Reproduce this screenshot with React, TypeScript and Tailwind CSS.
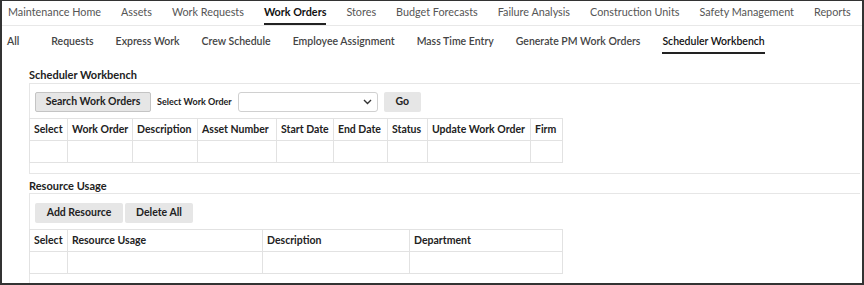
import React from "react";

const topNav = [
  "Maintenance Home",
  "Assets",
  "Work Requests",
  "Work Orders",
  "Stores",
  "Budget Forecasts",
  "Failure Analysis",
  "Construction Units",
  "Safety Management",
  "Reports",
];

const subNav = [
  "All",
  "Requests",
  "Express Work",
  "Crew Schedule",
  "Employee Assignment",
  "Mass Time Entry",
  "Generate PM Work Orders",
  "Scheduler Workbench",
];

const woCols: [string, number][] = [
  ["Select", 38],
  ["Work Order", 65],
  ["Description", 65],
  ["Asset Number", 79],
  ["Start Date", 57],
  ["End Date", 54],
  ["Status", 40],
  ["Update Work Order", 103],
  ["Firm", 32],
];

const resCols: [string, number][] = [
  ["Select", 38],
  ["Resource Usage", 195],
  ["Description", 147],
  ["Department", 153],
];

function Table({ cols }: { cols: [string, number][] }) {
  const total = cols.reduce((a, [, w]) => a + w, 0) + 1;
  return (
    <table
      className="table-fixed border-collapse text-[10.5px] text-[#222]"
      style={{ width: total }}
    >
      <colgroup>
        {cols.map(([c, w]) => (
          <col key={c} style={{ width: w }} />
        ))}
      </colgroup>
      <tbody>
        <tr className="h-[22px]">
          {cols.map(([c]) => (
            <th
              key={c}
              className="overflow-hidden border border-[#e2e2e2] px-[4px] text-left font-bold whitespace-nowrap"
            >
              {c}
            </th>
          ))}
        </tr>
        <tr className="h-[22px]">
          {cols.map(([c]) => (
            <td key={c} className="border border-[#e2e2e2]"></td>
          ))}
        </tr>
      </tbody>
    </table>
  );
}

function Btn({ children, className = "" }: { children: React.ReactNode; className?: string }) {
  return (
    <div
      className={
        "flex h-[20px] items-center justify-center rounded-[2px] bg-[#e6e6e6] text-[10.5px] font-bold text-[#222] " +
        className
      }
    >
      {children}
    </div>
  );
}

export default function App() {
  return (
    <div
      className="h-[285px] w-[864px] overflow-hidden border-x-2 border-b-2 border-t border-[#333] bg-white"
      style={{ fontFamily: "Lato, 'Noto Sans', sans-serif" }}
    >
      {/* top nav */}
      <div className="flex h-[25px] items-stretch gap-[20px] border-b border-[#e8e8e8] pl-[6px] text-[10.8px] text-[#555]">
        {topNav.map((t) => (
          <div
            key={t}
            className={
              "flex items-center whitespace-nowrap border-b-2 pt-[1px] " +
              (t === "Work Orders" ? "border-[#222] font-bold text-[#111]" : "border-transparent")
            }
          >
            {t}
          </div>
        ))}
      </div>
      {/* sub nav */}
      <div className="flex h-[28px] items-stretch gap-[22px] pl-[5px] text-[10.5px] text-[#444]">
        {subNav.map((t, i) => (
          <div
            key={t}
            className={
              "flex items-center whitespace-nowrap border-b-2 pt-[5px] font-semibold " +
              (i === 1 ? "ml-[10px] " : "") +
              (t === "Scheduler Workbench" ? "border-[#222] font-bold text-[#111]" : "border-transparent")
            }
          >
            {t}
          </div>
        ))}
      </div>

      <div className="pl-[27px] pr-[2px]">
        {/* Scheduler Workbench */}
        <div className="mt-[13px] h-[17px] border-b border-[#e6e6e6] text-[11px] leading-[16px] font-bold text-[#222]">
          Scheduler Workbench
        </div>
        <div className="border-b border-l border-[#e6e6e6] pb-[10px]">
          <div className="flex items-center gap-[6px] pt-[8px] pb-[6px] pl-[5px]">
            <Btn className="w-[116px] border border-[#c4c4c4]">Search Work Orders</Btn>
            <div className="text-[9px] font-bold text-[#222]">Select Work Order</div>
            <div className="flex h-[20px] w-[140px] items-center justify-end rounded-[3px] border border-[#d0d0d0] pr-[5px]">
              <svg width="9" height="6" viewBox="0 0 9 6">
                <path d="M1 1l3.5 3.5L8 1" fill="none" stroke="#333" strokeWidth="1.4" />
              </svg>
            </div>
            <Btn className="w-[37px]">Go</Btn>
          </div>
          <div className="-ml-px">
            <Table cols={woCols} />
          </div>
        </div>

        {/* Resource Usage */}
        <div className="mt-[4px] h-[16px] border-b border-[#e6e6e6] text-[11px] leading-[16px] font-bold text-[#222]">
          Resource Usage
        </div>
        <div className="border-l border-[#e6e6e6] pb-[20px]">
          <div className="flex items-center gap-[2px] pt-[9px] pb-[6px] pl-[5px]">
            <Btn className="w-[88px]">Add Resource</Btn>
            <Btn className="w-[68px]">Delete All</Btn>
          </div>
          <div className="-ml-px">
            <Table cols={resCols} />
          </div>
        </div>
      </div>
    </div>
  );
}
